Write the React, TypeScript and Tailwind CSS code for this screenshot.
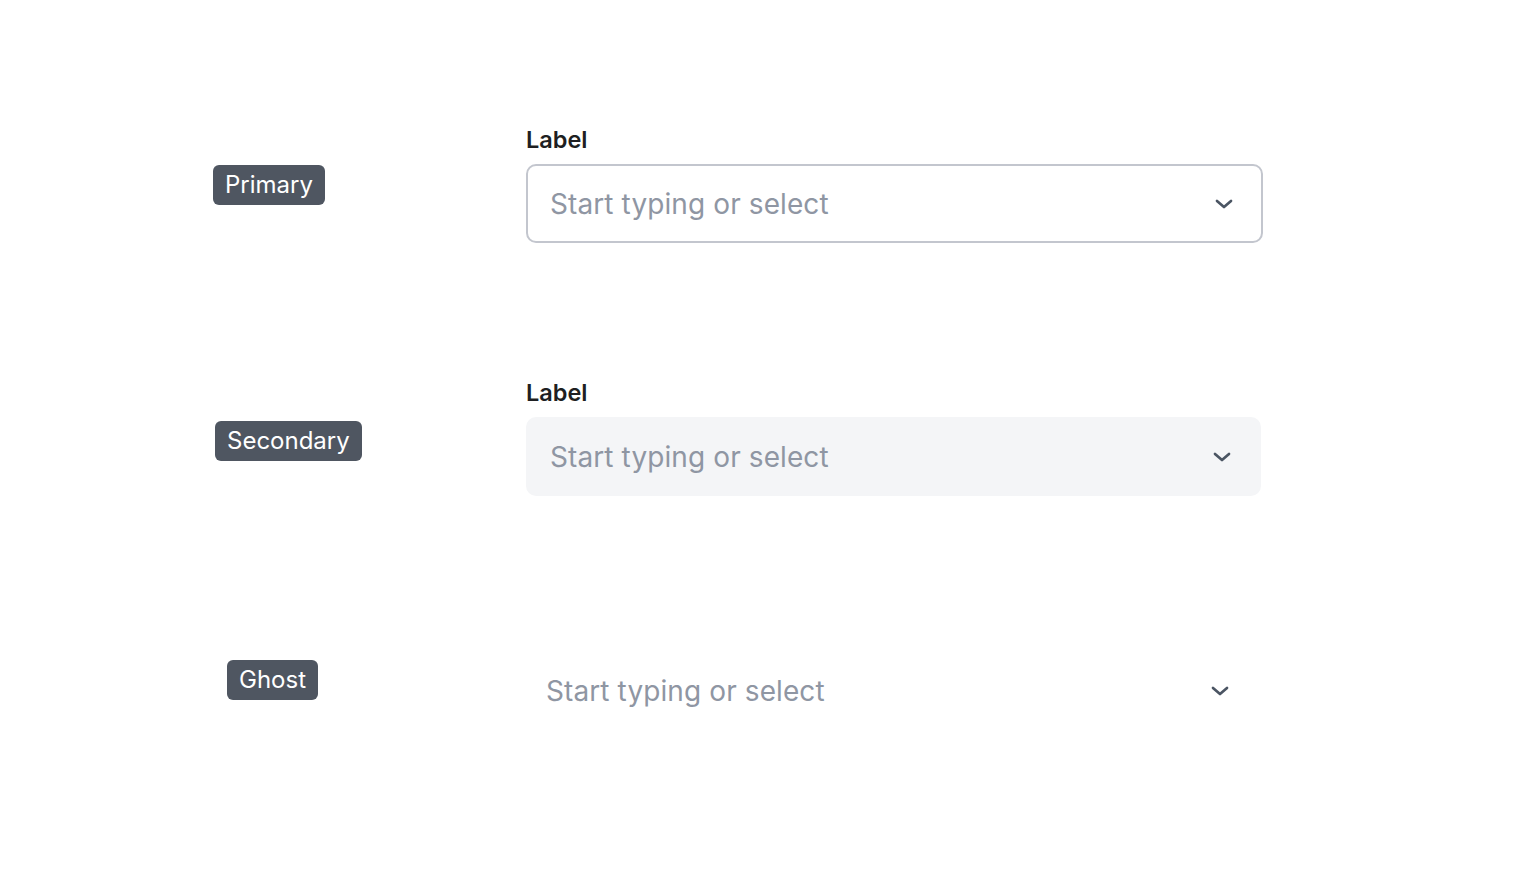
function Chevron() {
  return (
    <svg width="18" height="10" viewBox="0 0 18 10" fill="none" className="shrink-0 text-[#4b5563]">
      <polyline points="2,2 9,8 16,2" stroke="currentColor" strokeWidth="2.7" strokeLinecap="round" strokeLinejoin="round" />
    </svg>
  );
}

function Badge({ children, className }: { children: string; className: string }) {
  return (
    <span
      className={
        "inline-flex h-10 items-center rounded-md bg-[#4f5661] px-3 text-[24px] leading-none text-white " + className
      }
    >
      {children}
    </span>
  );
}

export default function App() {
  const font = { fontFamily: "Inter, 'Noto Sans', sans-serif" };
  return (
    <div className="min-h-screen bg-white" style={font}>
      <div className="flex flex-col pt-[127px]">
        {/* Primary */}
        <div className="flex items-start">
          <div className="w-[526px] shrink-0">
            <Badge className="ml-[213px] mt-[38px]">Primary</Badge>
          </div>
          <div className="flex w-[737px] flex-col">
            <label className="mb-[11px] text-[23.5px] font-semibold leading-[26px] text-[#1e1f22]">Label</label>
            <div className="flex h-[79px] items-center rounded-[10px] border-2 border-[#c3c6ce] pl-[22px] pr-[28px]">
              <input
                placeholder="Start typing or select"
                className="min-w-0 flex-1 bg-transparent text-[28px] tracking-[0.1px] text-[#1e1f22] outline-none placeholder:text-[#8f96a3]"
              />
              <Chevron />
            </div>
          </div>
        </div>

        {/* Secondary */}
        <div className="mt-[137px] flex items-start">
          <div className="w-[526px] shrink-0">
            <Badge className="ml-[215px] mt-[41px]">Secondary</Badge>
          </div>
          <div className="flex w-[735px] flex-col">
            <label className="mb-[11px] text-[23.5px] font-semibold leading-[26px] text-[#1e1f22]">Label</label>
            <div className="flex h-[79px] items-center rounded-[10px] bg-[#f4f5f7] pl-6 pr-[30px]">
              <input
                placeholder="Start typing or select"
                className="min-w-0 flex-1 bg-transparent text-[28px] tracking-[0.1px] text-[#1e1f22] outline-none placeholder:text-[#8f96a3]"
              />
              <Chevron />
            </div>
          </div>
        </div>

        {/* Ghost */}
        <div className="mt-[155px] flex items-start">
          <div className="w-[522px] shrink-0">
            <Badge className="ml-[227px] mt-[9px]">Ghost</Badge>
          </div>
          <div className="flex h-[79px] w-[737px] items-center rounded-[10px] pl-6 pr-[30px]">
            <input
              placeholder="Start typing or select"
              className="min-w-0 flex-1 bg-transparent text-[28px] tracking-[0.1px] text-[#1e1f22] outline-none placeholder:text-[#8f96a3]"
            />
            <Chevron />
          </div>
        </div>
      </div>
    </div>
  );
}
